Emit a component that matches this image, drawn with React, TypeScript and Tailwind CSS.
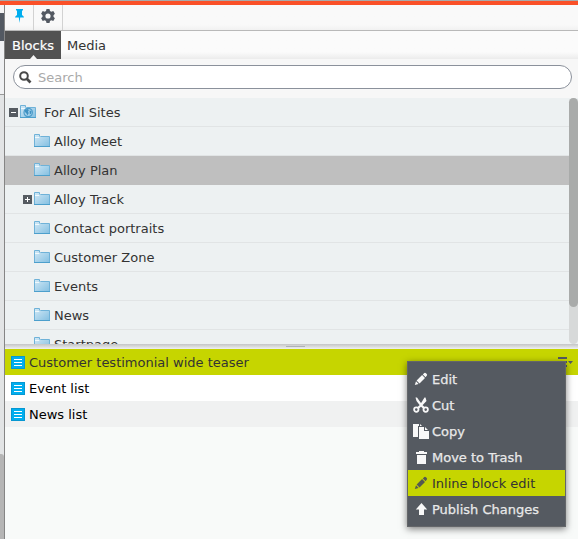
import type { ReactNode } from "react";

function Folder({ globe = false }: { globe?: boolean }) {
  return (
    <svg width="17" height="15" viewBox="0 0 17 15" className="shrink-0">
      <defs>
        <linearGradient id="folderFill" x1="0" y1="0" x2="1" y2="1">
          <stop offset="0" stopColor="#d3e9f6" />
          <stop offset="1" stopColor="#83bfe1" />
        </linearGradient>
      </defs>
      <path d="M.5 13.5V1.5H5.5V3.5H15.5V13.5Z" fill="url(#folderFill)" stroke="#6fb2d8" />
      <path d="M1 4.5H5L6 3.5" fill="none" stroke="#f0f9fd" />
      <path d="M0 13.5H16" stroke="#4c9fcc" />
      {globe && (
        <g>
          <circle cx="8.2" cy="8.5" r="4.2" fill="#a4d1eb" stroke="#4d9dcb" strokeWidth="1.2" />
          <path d="M5 6L7.5 5 9 6 8 7.5 8.7 9 7.5 11.5 6.5 9.5 5 8ZM9.5 6.5L11.5 7 11.2 9.5 9.8 10.5Z" fill="#3e91c2" />
        </g>
      )}
    </svg>
  );
}

function Toggle({ open }: { open: boolean }) {
  return (
    <svg width="9" height="9" viewBox="0 0 9 9" className="shrink-0">
      <path d="M0 0H9V9H0Z" fill="#555b61" />
      <path d={open ? "M2 4.5H7" : "M2 4.5H7M4.5 2V7"} stroke="#fff" />
    </svg>
  );
}

function BlockIcon() {
  return (
    <svg width="14" height="13" viewBox="0 0 14 13" className="shrink-0">
      <rect x=".5" y=".5" width="13" height="12" fill="#00aeef" stroke="#0797d1" />
      <path d="M3 3.5H11M3 6.5H11M3 9.5H11" stroke="#fff" />
    </svg>
  );
}

const tree = ["Alloy Meet", "Alloy Plan", "Alloy Track", "Contact portraits", "Customer Zone", "Events", "News", "Startpage"];

const pencil = (
  <svg width="16" height="16" viewBox="0 0 16 16" fill="currentColor">
    <path d="M1.8 14L3 10.3 5.6 12.9ZM3.6 9.6L9.1 4.1 12 7 6.5 12.4ZM9.8 3.4L11.3 2Q12.1 1.4 13 2.2L13.7 2.9Q14.5 3.8 13.9 4.6L12.6 6.2Z" />
  </svg>
);

const menu: { label: string; icon: ReactNode }[] = [
  { label: "Edit", icon: pencil },
  {
    label: "Cut",
    icon: (
      <svg width="16" height="16" viewBox="0 0 16 16">
        <path d="M2.5 0.5L4 0.5 9 7.5 12 10.5 10.5 12 7.5 9.2 3.5 4ZM12.5 0.5L13.5 4 8.5 9.2 5.5 12 4 10.5 7.2 7.5 11.5 0.5Z" fill="currentColor" />
        <circle cx="3.3" cy="12.6" r="2.2" fill="none" stroke="currentColor" strokeWidth="1.8" />
        <circle cx="12.7" cy="12.6" r="2.2" fill="none" stroke="currentColor" strokeWidth="1.8" />
      </svg>
    ),
  },
  {
    label: "Copy",
    icon: (
      <svg width="16" height="16" viewBox="0 0 16 16" fill="currentColor">
        <path d="M0 1H6V3H5V14H0ZM7 1L9 3H7ZM6 4H11V8H16V16H6ZM12 4L15 7H12Z" />
      </svg>
    ),
  },
  {
    label: "Move to Trash",
    icon: (
      <svg width="16" height="16" viewBox="0 0 16 16" fill="currentColor">
        <path d="M3 3H6V2H11V3H14V5H3ZM4 6H13V15H4Z" />
      </svg>
    ),
  },
  { label: "Inline block edit", icon: pencil },
  {
    label: "Publish Changes",
    icon: (
      <svg width="16" height="16" viewBox="0 0 16 16" fill="currentColor">
        <path d="M8.5 2L14.2 8.5H11V14H6V8.5H2.8Z" />
      </svg>
    ),
  },
];

const blocks = ["Customer testimonial wide teaser", "Event list", "News list"];

export default function App() {
  return (
    <div className="relative flex h-[539px] w-[578px] flex-col overflow-hidden bg-[#f8faf9] font-['Verdana','DejaVu_Sans',sans-serif] text-[13px] leading-4 text-[#333]">
      <div className="h-px shrink-0 bg-[#a9a9aa]" />
      <div className="h-1 shrink-0 bg-[#fa5028]" />
      <div className="flex min-h-0 flex-1">
        <div className="flex w-[5px] shrink-0 flex-col border-r border-[#858585] bg-[#e2e4e5]">
          <div className="h-2 bg-[#f4f4f4]" />
          <div className="h-7 bg-[#535962]" />
          <div className="h-[53px] bg-[#f0f1f3]" />
          <div className="h-px bg-[#999]" />
          <div className="flex-1" />
          <div className="h-[85px] rounded-tr-[3px] bg-[#b5b5b5]" />
        </div>

        <div className="flex min-w-0 flex-1 flex-col">
          <div className="flex h-[26px] shrink-0 border-b border-[#b9b9b9] bg-gradient-to-b from-[#f9f9f9] from-80% to-[#f1f1f1]">
            <div className="flex w-[29px] justify-center border-r border-[#d2d2d2] pt-1 pl-px">
              <svg width="9" height="14" viewBox="0 0 9 14">
                <path d="M1 0H8V1.5H7V6Q9 7 9 8.5H5.2L4.5 14 3.8 8.5H0Q0 7 2 6V1.5H1Z" fill="#00aeef" />
              </svg>
            </div>
            <div className="flex w-[29px] justify-center border-r border-[#d2d2d2] pt-[3px]">
              <svg width="16" height="16" viewBox="0 0 16 16">
                <path
                  fill="#535962"
                  fillRule="evenodd"
                  d="M6.5 1H9.5L10 3 11.3 3.7 13.3 3.1 14.9 5.8 13.5 7.2V8.8L14.9 10.2 13.3 12.9 11.3 12.3 10 13 9.5 15H6.5L6 13 4.7 12.3 2.7 12.9 1.1 10.2 2.5 8.8V7.2L1.1 5.8 2.7 3.1 4.7 3.7 6 3ZM8 5.4A2.6 2.6 0 1 0 8 10.6A2.6 2.6 0 1 0 8 5.4Z"
                />
              </svg>
            </div>
          </div>

          <div className="flex h-7 shrink-0 bg-gradient-to-b from-[#fbfbfb] from-75% to-[#ececec]">
            <div className="relative flex w-14 justify-center bg-[#525252] pt-[7px] text-white [-webkit-text-stroke:0.2px_white]">
              Blocks
              <svg width="7" height="4" viewBox="0 0 7 4" className="absolute bottom-0 left-[25px]">
                <path d="M0 4L3.5 0 7 4Z" fill="#f7f7f7" />
              </svg>
            </div>
            <div className="pt-[7px] pl-[6px]">Media</div>
          </div>

          <div className="h-[39px] shrink-0 bg-[#f7f7f7] pt-[6px] pr-[6px] pl-2">
            <div className="flex h-6 items-center rounded-full border border-[#8b919b] bg-white pl-[5px] text-[#aaa]">
              <svg width="13" height="13" viewBox="0 0 13 13" className="mr-[6px]">
                <circle cx="5" cy="5" r="3.8" fill="none" stroke="#484848" strokeWidth="2" />
                <path d="M7.8 7.8L11.5 11.5" stroke="#484848" strokeWidth="2.7" />
              </svg>
              <span className="pt-[2px]">Search</span>
            </div>
          </div>

          <div className="flex h-[246px] shrink-0 overflow-hidden bg-[#edf1f2]">
            <div className="min-w-0 flex-1">
              <div className="flex h-[29px] items-center border-b border-[#e1e4e5] pl-1">
                <Toggle open />
                <div className="ml-[2px] pb-px">
                  <Folder globe />
                </div>
                <span className="ml-[7px] pt-[2px]">For All Sites</span>
              </div>
              {tree.map((name) => (
                <div
                  key={name}
                  className={`flex h-[29px] items-center border-b pl-[18px] ${name === "Alloy Plan" ? "border-[#bfbfbf] bg-[#bfbfbf]" : "border-[#e1e4e5]"}`}
                >
                  <div className="w-[11px]">{name === "Alloy Track" && <Toggle open={false} />}</div>
                  <div className="pb-px">
                    <Folder />
                  </div>
                  <span className="ml-[3px] pt-[2px]">{name}</span>
                </div>
              ))}
            </div>
            <div className="w-[9px] rounded-full bg-[#d7d9d9]">
              <div className="h-[209px] rounded-full bg-[#a9abaa]" />
            </div>
          </div>

          <div className="flex h-[5px] shrink-0 justify-center bg-gradient-to-b from-[#c4c5c6] to-[#eff1f2] pt-[2px] pl-2">
            <div className="h-px w-[19px] bg-[#aeb1b7]" />
          </div>

          {blocks.map((name, index) => (
            <div
              key={name}
              className={`flex h-[26px] shrink-0 items-center pl-[6px] ${index === 0 ? "bg-[#c6d500]" : index === 1 ? "bg-white text-black" : "bg-[#f0f1f1] text-black"}`}
            >
              <BlockIcon />
              <span className="ml-1 flex-1 pt-[2px]">{name}</span>
              {index === 0 && (
                <svg width="16" height="12" viewBox="0 0 16 12" className="mr-[4px]">
                  <path d="M0 1H9V3H0ZM0 5H9V7H0ZM0 9H9V11H0ZM10 5H15L12.5 8Z" fill="#535962" />
                </svg>
              )}
            </div>
          ))}
        </div>
      </div>

      <div className="absolute top-[361px] left-[407px] h-[166px] w-[159px] border border-[#646669] bg-[#555a61] py-1 shadow-[0_2px_7px_rgba(0,0,0,0.5)]">
        {menu.map(({ label, icon }) => (
          <div
            key={label}
            className={`flex h-[26px] items-center pl-[5px] ${label === "Inline block edit" ? "bg-[#c6d500] text-[#555a50]" : "text-[#f8f8f8]"}`}
          >
            {icon}
            <span
              className={`ml-[3px] pt-[2px] whitespace-nowrap ${label === "Inline block edit" ? "text-[#333]" : "text-[#e9e9e9] [-webkit-text-stroke:0.25px_#e9e9e9]"}`}
            >
              {label}
            </span>
          </div>
        ))}
      </div>
    </div>
  );
}
